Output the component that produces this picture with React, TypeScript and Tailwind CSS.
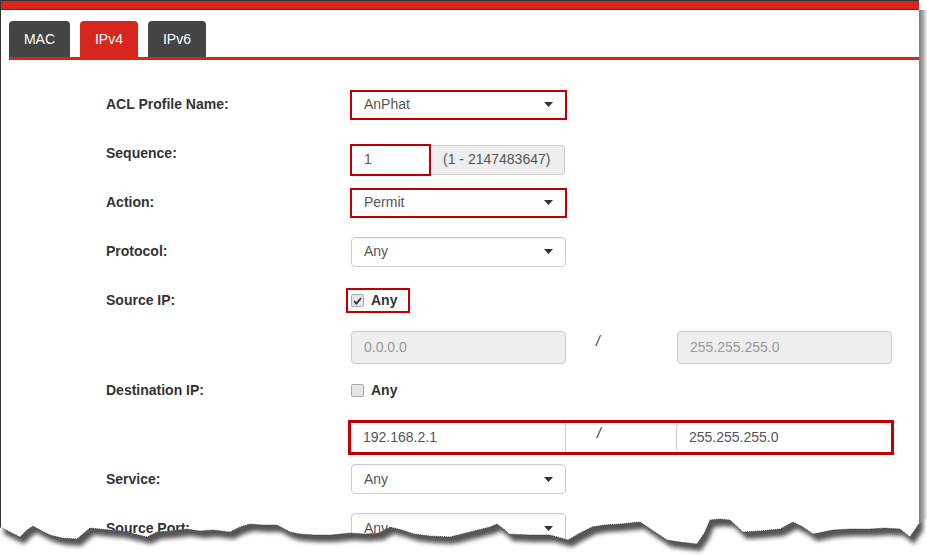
import React from 'react';

const RED = 'border-[#c00000]';

const Caret = () => (
  <svg width="9" height="5" viewBox="0 0 9 5" className="shrink-0">
    <path d="M0 0h9L4.5 5z" fill="#333" />
  </svg>
);

const Label: React.FC<{ text: string }> = ({ text }) => (
  <div className="w-[245px] shrink-0 text-[14px] font-bold text-[#333]">{text}</div>
);

const Select: React.FC<{ value: string; hl?: boolean }> = ({ value, hl }) =>
  hl ? (
    <div className={`-ml-px flex h-[30px] w-[217px] items-center justify-between border-2 ${RED} pl-[12px] pr-[12px] text-[14px] text-[#555]`}>
      <span>{value}</span>
      <Caret />
    </div>
  ) : (
    <div className="flex h-[30px] w-[215px] items-center justify-between rounded-[4px] border border-[#ccc] pl-[12px] pr-[12px] text-[14px] text-[#555] shadow-[inset_0_1px_1px_rgba(0,0,0,0.06)]">
      <span>{value}</span>
      <Caret />
    </div>
  );

const Check: React.FC<{ checked?: boolean }> = ({ checked }) => (
  <div className="flex items-center gap-[7px]">
    <div className="flex h-[13px] w-[13px] items-center justify-center rounded-[2px] border border-[#aaa] bg-[#e6e6e6]">
      {checked && (
        <svg width="9" height="8" viewBox="0 0 9 8">
          <path d="M1 4.2 3.4 6.6 8 1" stroke="#333" strokeWidth="1.8" fill="none" />
        </svg>
      )}
    </div>
    <span className="text-[14px] font-bold text-[#333]">Any</span>
  </div>
);

// torn paper edge along the bottom of the capture
const edge: [number, number][] = [
  [0, 30], [10, 35], [20, 40], [27, 33], [33, 29], [42, 34], [50, 38], [62, 41], [77, 42], [84, 36],
  [90, 31], [100, 32], [110, 33], [122, 34], [135, 37], [147, 40], [157, 35], [170, 34], [187, 32],
  [200, 34], [213, 33], [230, 35], [240, 30], [250, 27], [262, 28], [277, 28], [290, 35], [300, 37],
  [315, 38], [331, 38], [350, 36], [365, 37], [379, 36], [390, 30], [402, 33], [414, 37], [430, 39],
  [450, 40], [470, 35], [490, 30], [497, 27], [505, 33], [509, 37], [530, 38], [550, 38], [568, 43],
  [580, 36], [592, 30], [604, 28], [620, 27], [640, 25], [655, 35], [667, 43], [680, 45], [697, 47],
  [705, 35], [710, 23], [720, 22], [730, 23], [743, 35], [760, 34], [780, 32], [793, 25], [803, 30],
  [813, 37], [833, 33], [850, 32], [870, 32], [885, 31], [900, 32], [910, 40], [918, 28], [919, 27],
];

const TornEdge = () => {
  const line = edge.map(([x, y]) => `${x},${y}`).join(' ');
  const below = `M${edge.map(([x, y]) => `${x},${y}`).join(' L')} L927,20 L927,60 L0,60 Z`;
  const paper = `M0,0 L919,0 L${edge.slice().reverse().map(([x, y]) => `${x},${y}`).join(' L')} Z`;
  return (
    <svg className="pointer-events-none absolute bottom-0 left-0" width="927" height="60" viewBox="0 0 927 60">
      <defs>
        <filter id="blur" x="-5%" y="-50%" width="110%" height="200%">
          <feGaussianBlur stdDeviation="2.2" />
        </filter>
        <clipPath id="below">
          <path d={below} />
        </clipPath>
      </defs>
      <path d={below} fill="#fff" />
      <g clipPath="url(#below)">
        <path d={paper} fill="#555" filter="url(#blur)" transform="translate(4,7)" />
      </g>
      <polyline points={line} fill="none" stroke="#333" strokeWidth="0.8" strokeDasharray="1 1" />
    </svg>
  );
};

export default function App() {
  return (
    <div className="relative flex h-[557px] w-[927px] overflow-hidden bg-white font-['Liberation_Sans',Arial,sans-serif]">
      <div className="block w-[919px] shrink-0 border-l border-t border-[#333]">
        <div className="h-[8px] bg-[#d8261e]" />
        <div className="h-px bg-[#8a1a14]" />

        {/* tabs */}
        <div className="ml-[8px] mt-[11px] flex gap-[10px] border-b-[3px] border-[#d8261e]">
          <div className="flex h-[36px] w-[61px] items-center justify-center rounded-t-[4px] bg-[#444] text-[14px] text-white">MAC</div>
          <div className="flex h-[36px] w-[58px] items-center justify-center rounded-t-[4px] bg-[#d8261e] text-[14px] text-white">IPv4</div>
          <div className="flex h-[36px] w-[58px] items-center justify-center rounded-t-[4px] bg-[#444] text-[14px] text-white">IPv6</div>
        </div>

        <div className="mt-[20px] flex flex-col pl-[105px]">
          <div className="flex h-[49px] shrink-0 items-center">
            <Label text="ACL Profile Name:" />
            <Select value="AnPhat" hl />
          </div>

          <div className="flex h-[49px] shrink-0 items-center">
            <Label text="Sequence:" />
            <div className="mt-[12px] flex">
              <div className={`-ml-px flex h-[32px] w-[81px] items-center border-2 ${RED} pl-[12px] text-[14px] text-[#555]`}>1</div>
              <div className="my-px flex h-[30px] w-[134px] items-center rounded-r-[4px] border border-l-0 border-[#ccc] bg-[#eee] pl-[12px] text-[14px] text-[#555]">
                (1 - 2147483647)
              </div>
            </div>
          </div>

          <div className="flex h-[49px] shrink-0 items-center">
            <Label text="Action:" />
            <Select value="Permit" hl />
          </div>

          <div className="flex h-[49px] shrink-0 items-center">
            <Label text="Protocol:" />
            <Select value="Any" />
          </div>

          <div className="flex h-[49px] shrink-0 items-center">
            <Label text="Source IP:" />
            <div className={`-ml-[5px] flex h-[25px] w-[64px] items-center border-2 ${RED} pl-[3px]`}>
              <Check checked />
            </div>
          </div>

          <div className="flex h-[44px] shrink-0 items-center">
            <div className="w-[245px] shrink-0" />
            <div className="flex h-[33px] w-[215px] items-center rounded-[4px] border border-[#ccc] bg-[#eee] pl-[12px] text-[14px] text-[#999]">0.0.0.0</div>
            <div className="h-[33px] w-[111px] pl-[30px] text-[14px] italic text-[#333]">/</div>
            <div className="flex h-[33px] w-[215px] items-center rounded-[4px] border border-[#ccc] bg-[#eee] pl-[12px] text-[14px] text-[#999]">255.255.255.0</div>
          </div>

          <div className="flex h-[42px] shrink-0 items-center">
            <Label text="Destination IP:" />
            <Check />
          </div>

          <div className="flex h-[52px] shrink-0 items-center">
            <div className="w-[242px] shrink-0" />
            <div className={`flex h-[35px] w-[546px] items-stretch border-[3px] ${RED}`}>
              <div className="flex w-[215px] items-center border-r border-[#ccc] pl-[12px] text-[14px] text-[#555]">192.168.2.1</div>
              <div className="w-[110px] pl-[31px] text-[14px] italic text-[#333]">/</div>
              <div className="flex flex-1 items-center rounded-l-[4px] border-l border-[#ccc] pl-[12px] text-[14px] text-[#555]">255.255.255.0</div>
            </div>
          </div>

          <div className="flex h-[32px] shrink-0 items-center">
            <Label text="Service:" />
            <Select value="Any" />
          </div>

          <div className="flex h-[66px] shrink-0 items-center">
            <Label text="Source Port:" />
            <Select value="Any" />
          </div>
        </div>
      </div>

      {/* drop shadow on the right edge */}
      <div className="mt-[10px] w-[8px] shrink-0 bg-gradient-to-r from-[#7a7a7a] via-[#a8a8a8] to-[#f4f4f4]" />

      <TornEdge />
    </div>
  );
}
